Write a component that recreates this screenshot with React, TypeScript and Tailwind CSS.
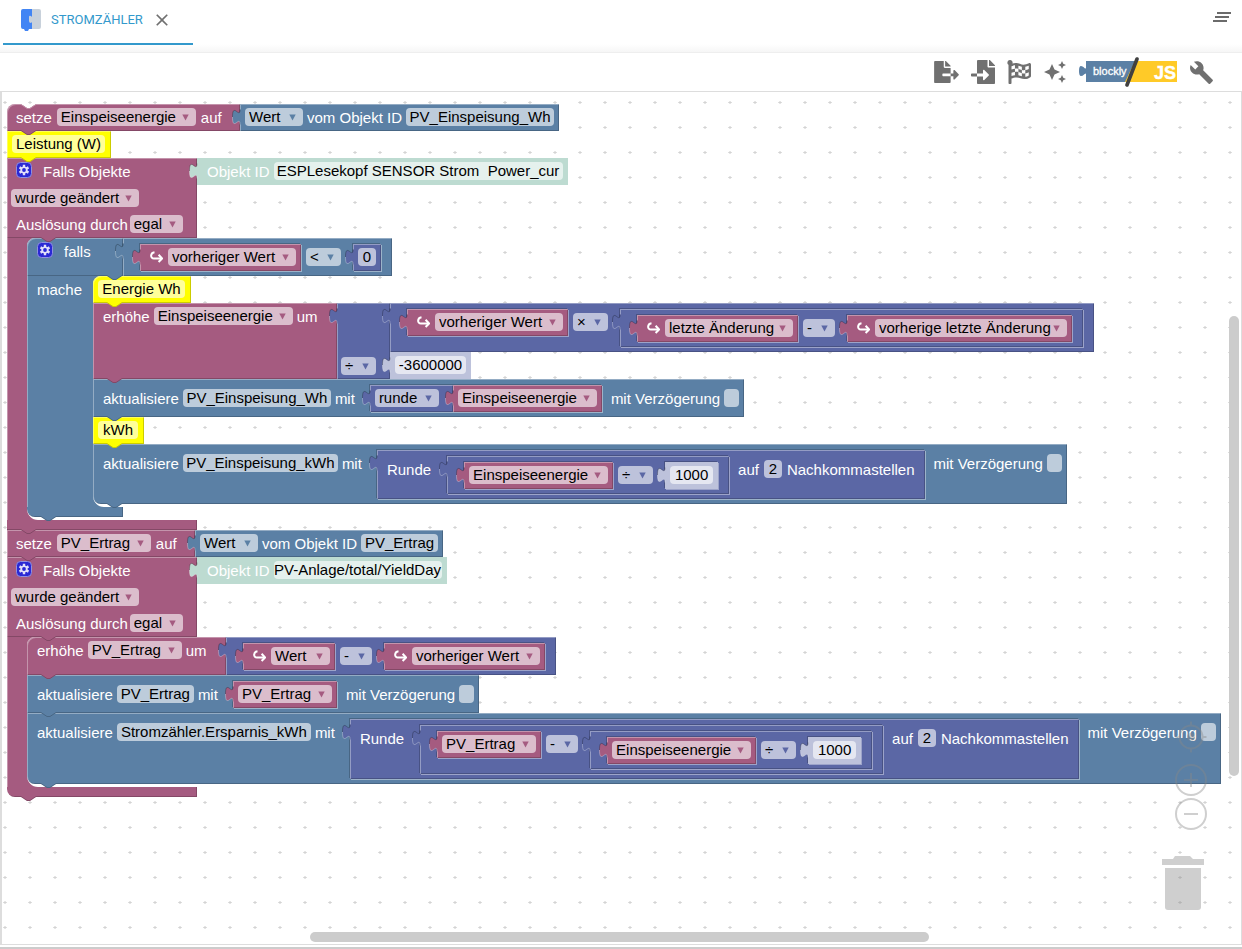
import React from 'react';
import clsx from 'clsx';
import { FaFileExport, FaFileImport, FaFlagCheckered } from 'react-icons/fa';
import { MdAutoAwesome, MdBuild, MdClearAll, MdClose } from 'react-icons/md';

type Tone = 'rose' | 'blue' | 'indigo' | 'yellow' | 'mint' | 'pale';

const BEVEL = 'shadow-[inset_1px_1px_0_rgba(255,255,255,0.35),inset_-1px_-1px_0_rgba(0,0,0,0.2)]';
const FLAT = 'shadow-none';

const TONES: Record<Tone, { body: string; field: string; ink: string; bevel: string }> = {
  rose: { body: 'bg-[#a55b80]', field: 'bg-[#dbbdcc]', ink: 'text-[#a55b80]', bevel: BEVEL },
  blue: { body: 'bg-[#5b80a5]', field: 'bg-[#bdccdb]', ink: 'text-[#5b80a5]', bevel: BEVEL },
  indigo: { body: 'bg-[#5b67a5]', field: 'bg-[#bdc2db]', ink: 'text-[#5b67a5]', bevel: BEVEL },
  yellow: { body: 'bg-[#ffff00]', field: 'bg-[#ffff99]', ink: 'text-[#ffff00]', bevel: BEVEL },
  mint: { body: 'bg-[#bddbd1]', field: 'bg-[#e5f1ed]', ink: 'text-[#bddbd1]', bevel: FLAT },
  pale: { body: 'bg-[#bdc2db]', field: 'bg-[#e5e7f1]', ink: 'text-[#bdc2db]', bevel: FLAT },
};

type Kids = { children?: React.ReactNode };

/* ---------- fields ---------- */

function Label({ className, children }: Kids & { className?: string }) {
  return <span className={clsx('shrink-0 whitespace-nowrap leading-[27px] text-white', className)}>{children}</span>;
}

function Pick({ tone, value, w, name }: { tone: Tone; value: string; w: string; name: string }) {
  return (
    <span className={clsx('my-1 grid h-[18px] shrink-0 items-center rounded', TONES[tone].field, w)}>
      <select
        aria-label={name}
        defaultValue={value}
        className="col-start-1 row-start-1 h-[18px] w-full appearance-none bg-transparent pl-1 leading-[18px] text-black outline-none"
      >
        <option>{value}</option>
      </select>
      <svg
        viewBox="0 0 7 7"
        className={clsx('pointer-events-none col-start-1 row-start-1 mr-[7px] h-[7px] w-[7px] justify-self-end', TONES[tone].ink)}
      >
        <path d="M0.3 0.5H6.7L3.5 6.5Z" fill="currentColor" />
      </svg>
    </span>
  );
}

function Entry({ tone, value, w, name }: { tone: Tone; value: string; w: string; name: string }) {
  return (
    <input
      type="text"
      aria-label={name}
      defaultValue={value}
      className={clsx('my-1 h-[18px] shrink-0 rounded text-center leading-[18px] text-black outline-none', TONES[tone].field, w)}
    />
  );
}

function Delay() {
  return (
    <label className="ml-[5px] flex shrink-0 items-start gap-1">
      <Label>mit Verzögerung</Label>
      <input type="checkbox" className="my-1 h-[18px] w-[15px] appearance-none rounded bg-[#bdccdb]" />
    </label>
  );
}

/* ---------- block pieces ---------- */

function Tab({ tone }: { tone: Tone }) {
  return (
    <svg viewBox="0 0 9 16" className={clsx('absolute -left-2 top-[5px] h-4 w-[9px]', TONES[tone].ink)}>
      <path d="M9 0.5H8C8 10.5 0.5 -7.5 0.5 8S8 5.5 8 15.5H9Z" fill="currentColor" />
      <path d="M8 0.5C8 10.5 0.5 -7.5 0.5 8" fill="none" stroke="#000" strokeOpacity="0.25" />
      <path d="M0.5 8C0.5 23.5 8 5.5 8 15.5" fill="none" stroke="#fff" strokeOpacity="0.3" />
    </svg>
  );
}

function Notch({ tone, className }: { tone: Tone; className: string }) {
  return (
    <svg viewBox="0 0 15 6" className={clsx('absolute z-10 h-[6px] w-[15px]', TONES[tone].ink, className)}>
      <path d="M0 0V1L6 5H9L15 1V0Z" fill="currentColor" />
      <path d="M0 0.5L6 4.5H9L15 0.5" fill="none" stroke="#000" strokeOpacity="0.2" />
    </svg>
  );
}

function Body({ tone, gap = 'gap-[5px]', className, children }: Kids & { tone: Tone; gap?: string; className?: string }) {
  return (
    <div className={clsx('relative flex min-h-[27px] shrink-0 items-start', gap, TONES[tone].body, TONES[tone].bevel, className)}>
      {children}
    </div>
  );
}

type BlockProps = Kids & { tone: Tone; gap?: string; className?: string; side?: React.ReactNode };

// a block that plugs into an input; "side" holds whatever is plugged into its own right edge
function Value({ tone, inset, gap, className, side, children }: BlockProps & { inset?: boolean }) {
  return (
    <div
      className={clsx(
        'relative flex shrink-0 self-start',
        inset && 'ml-[7px] shadow-[-1px_-1px_0_rgba(0,0,0,0.2),1px_1px_0_rgba(255,255,255,0.4)]',
      )}
    >
      <Body tone={tone} gap={gap} className={className}>{children}</Body>
      <Tab tone={tone} />
      {side}
    </div>
  );
}

function Statement({ tone, gap, className, side, children }: BlockProps) {
  return (
    <div className="relative flex w-max">
      <Body tone={tone} gap={gap} className={className}>{children}</Body>
      {side}
      <Notch tone={tone} className="left-[14px] top-full -mt-px" />
    </div>
  );
}

// the C-shaped mouth of a block: arm on the left, nested statements, foot below
function Mouth({ tone, arm, foot, label, children }: Kids & { tone: Tone; arm: string; foot: string; label?: string }) {
  return (
    <>
      <div className="flex">
        <div className={clsx('shrink-0 pl-[10px] shadow-[inset_1px_0_0_rgba(255,255,255,0.35)]', TONES[tone].body, arm)}>
          {label && <Label>{label}</Label>}
        </div>
        <div className="relative pb-[3px]">
          <svg viewBox="0 0 8 8" className={clsx('absolute left-0 top-0 h-2 w-2', TONES[tone].ink)}>
            <path d="M0 0H8A8 8 0 0 0 0 8Z" fill="currentColor" />
          </svg>
          <Notch tone={tone} className="left-[14px] top-0 -mt-px" />
          {children}
          <svg viewBox="0 0 11 11" className={clsx('absolute bottom-0 left-0 h-[11px] w-[11px]', TONES[tone].ink)}>
            <path d="M0 0V11H11A11 11 0 0 1 0 0Z" fill="currentColor" />
          </svg>
        </div>
      </div>
      <div className={clsx('relative h-[10px] shadow-[inset_-1px_-1px_0_rgba(0,0,0,0.2)]', TONES[tone].body, foot)}>
        <Notch tone={tone} className="left-[14px] top-full -mt-px" />
      </div>
    </>
  );
}

function Gear() {
  return (
    <button type="button" aria-label="Block anpassen" className="mt-1 shrink-0">
      <svg viewBox="0 0 16 16" className="h-4 w-4">
        <rect x="0.5" y="0.5" width="15" height="15" rx="4" fill="#2a28d4" stroke="#8f8fe0" />
        <g stroke="#e2e0fa" strokeWidth="2.4">
          <path d="M8 2.8V13.2M3.5 5.4L12.5 10.6M12.5 5.4L3.5 10.6" />
        </g>
        <circle cx="8" cy="8" r="3.6" fill="#e2e0fa" />
        <circle cx="8" cy="8" r="1.9" fill="#2a28d4" />
      </svg>
    </button>
  );
}

/* ---------- recurring blocks ---------- */

function Variable({ name, w, inset }: { name: string; w: string; inset?: boolean }) {
  return (
    <Value tone="rose" inset={inset} className="px-[5px]">
      <Pick tone="rose" value={name} w={w} name="Variable" />
    </Value>
  );
}

function Trigger({ name, w }: { name: string; w: string }) {
  return (
    <Value tone="rose" inset className="pl-[10px] pr-[5px]">
      <svg viewBox="0 0 13 12" className="mt-[7px] h-3 w-[13px] shrink-0" fill="none" stroke="#fff" strokeWidth="2">
        <path d="M4.5 1.2C0.2 1.8 0 7.5 4 7.5H11.5" />
        <path d="M8.6 3.8L12 7.5L8.6 11" />
      </svg>
      <Pick tone="rose" value={name} w={w} name="Eigenschaft" />
    </Value>
  );
}

function Num({ value, w, inset }: { value: string; w: string; inset?: boolean }) {
  return (
    <Value tone="pale" inset={inset} className="px-[5px]">
      <Entry tone="pale" value={value} w={w} name="Zahl" />
    </Value>
  );
}

function Op({ tone = 'indigo', value, w = 'w-[35px]' }: { tone?: Tone; value: string; w?: string }) {
  return <Pick tone={tone} value={value} w={w} name="Operator" />;
}

function ReadObject({ id, w }: { id: string; w: string }) {
  return (
    <Value tone="blue" gap="gap-1" className="px-[5px]">
      <Pick tone="blue" value="Wert" w="w-[58px]" name="Attribut" />
      <Label>vom Objekt ID</Label>
      <Entry tone="blue" value={id} w={w} name="Objekt ID" />
    </Value>
  );
}

function TriggerHead({ id, w }: { id: string; w: string }) {
  return (
    <div className="flex">
      <Body tone="rose" gap="gap-0" className="w-[190px] flex-col">
        <div className="flex items-start gap-[11px] pl-[9px]">
          <Gear />
          <Label>Falls Objekte</Label>
        </div>
        <div className="flex pl-1">
          <Pick tone="rose" value="wurde geändert" w="w-[128px]" name="Bedingung" />
        </div>
        <div className="flex gap-[2px] pl-[9px]">
          <Label>Auslösung durch</Label>
          <Pick tone="rose" value="egal" w="w-[53px]" name="Auslösung durch" />
        </div>
      </Body>
      <Value tone="mint" gap="gap-1" className="pl-[10px] pr-[5px]">
        <Label>Objekt ID</Label>
        <Entry tone="mint" value={id} w={w} name="Objekt ID" />
      </Value>
    </div>
  );
}

function Update({ id, w, last, children }: Kids & { id: string; w: string; last?: boolean }) {
  return (
    <Statement tone="blue" gap="gap-1" className={clsx('pb-[5px] pl-[10px] pr-[5px] pt-[6px]', last && 'rounded-bl-lg')}>
      <Label>aktualisiere</Label>
      <Entry tone="blue" value={id} w={w} name="Objekt ID" />
      <Label className="mr-1">mit</Label>
      {children}
      <Delay />
    </Statement>
  );
}

function Round({ children }: Kids) {
  return (
    <Value tone="indigo" inset className="px-[10px] pb-[5px] pt-[6px]">
      <Label className="mr-1">Runde</Label>
      {children}
      <Label className="ml-1">auf</Label>
      <Entry tone="indigo" value="2" w="w-[18px]" name="Nachkommastellen" />
      <Label>Nachkommastellen</Label>
    </Value>
  );
}

function Maths({ inset, tone = 'indigo', children }: Kids & { inset?: boolean; tone?: Tone }) {
  return <Value tone={tone} inset={inset} className="pb-[5px] pl-[10px] pr-[11px] pt-[6px]">{children}</Value>;
}

function Comment({ text, w, first }: { text: string; w: string; first?: boolean }) {
  return (
    <Statement tone="yellow" className={clsx('pl-[5px] pr-[6px]', first && 'rounded-tl-lg')}>
      <Entry tone="yellow" value={text} w={w} name="Kommentar" />
    </Statement>
  );
}

/* ---------- the program ---------- */

function Program() {
  return (
    <div className="w-max font-['Liberation_Sans',sans-serif] text-[15px]">
      <div className="relative">
        <svg viewBox="0 0 15 5" className="absolute left-[14px] top-0 z-10 h-[5px] w-[15px]">
          <path d="M0 0L6 4H9L15 0Z" fill="#fff" />
          <path d="M0 0.5L6 4.5H9L15 0.5" fill="none" stroke="#c08ca6" />
        </svg>
        <Statement tone="rose" className="w-[233px] rounded-tl-lg pl-[9px]" side={<ReadObject id="PV_Einspeisung_Wh" w="w-[148px]" />}>
          <Label>setze</Label>
          <Pick tone="rose" value="Einspeiseenergie" w="w-[139px]" name="Variable" />
          <Label>auf</Label>
        </Statement>
      </div>
      <Comment text="Leistung (W)" w="w-[93px]" />

      <TriggerHead id="ESPLesekopf SENSOR Strom  Power_cur" w="w-[289px]" />
      <Mouth tone="rose" arm="w-5" foot="w-[190px]">
        <div className="flex">
          <Body tone="blue" gap="gap-[11px]" className="w-[96px] rounded-tl-lg pl-[10px]">
            <Gear />
            <Label>falls</Label>
          </Body>
          <Maths tone="blue">
            <Trigger name="vorheriger Wert" w="w-[128px]" />
            <Op tone="blue" value="<" />
            <Value tone="indigo" inset className="px-[5px]">
              <Entry tone="indigo" value="0" w="w-[18px]" name="Zahl" />
            </Value>
          </Maths>
        </div>
        <Mouth tone="blue" arm="w-[66px]" foot="w-[96px] rounded-bl-lg" label="mache">
          <Comment text="Energie Wh" w="w-[87px]" first />
          <Statement
            tone="rose"
            gap="gap-1"
            className="w-[244px] pl-[10px]"
            side={
              <Value
                tone="indigo"
                className="w-[53px] items-end! pl-1"
                side={
                  <div className="flex flex-col">
                    <Maths>
                      <Trigger name="vorheriger Wert" w="w-[128px]" />
                      <Op value="×" />
                      <Maths inset>
                        <Trigger name="letzte Änderung" w="w-[128px]" />
                        <Op value="-" w="w-[32px]" />
                        <Trigger name="vorherige letzte Änderung" w="w-[192px]" />
                      </Maths>
                    </Maths>
                    <Num value="-3600000" w="w-[71px]" />
                  </div>
                }
              >
                <Op value="÷" />
              </Value>
            }
          >
            <Label>erhöhe</Label>
            <Pick tone="rose" value="Einspeiseenergie" w="w-[139px]" name="Variable" />
            <Label>um</Label>
          </Statement>
          <Update id="PV_Einspeisung_Wh" w="w-[148px]">
            <Value tone="indigo" inset className="w-[83px] pl-[5px]" side={<Variable name="Einspeiseenergie" w="w-[139px]" />}>
              <Pick tone="indigo" value="runde" w="w-[64px]" name="Rundung" />
            </Value>
          </Update>
          <Comment text="kWh" w="w-10" />
          <Update id="PV_Einspeisung_kWh" w="w-[155px]" last>
            <Round>
              <Maths inset>
                <Variable name="Einspeiseenergie" w="w-[139px]" inset />
                <Op value="÷" />
                <Num value="1000" w="w-[43px]" inset />
              </Maths>
            </Round>
          </Update>
        </Mouth>
      </Mouth>

      <Statement tone="rose" className="w-[188px] pl-[9px]" side={<ReadObject id="PV_Ertrag" w="w-[77px]" />}>
        <Label>setze</Label>
        <Pick tone="rose" value="PV_Ertrag" w="w-[94px]" name="Variable" />
        <Label>auf</Label>
      </Statement>

      <TriggerHead id="PV-Anlage/total/YieldDay" w="w-[168px]" />
      <Mouth tone="rose" arm="w-5" foot="w-[190px] rounded-bl-lg">
        <Statement
          tone="rose"
          gap="gap-1"
          className="w-[199px] rounded-tl-lg pl-[10px]"
          side={
            <Maths>
              <Trigger name="Wert" w="w-[59px]" />
              <Op value="-" w="w-[32px]" />
              <Trigger name="vorheriger Wert" w="w-[128px]" />
            </Maths>
          }
        >
          <Label>erhöhe</Label>
          <Pick tone="rose" value="PV_Ertrag" w="w-[94px]" name="Variable" />
          <Label>um</Label>
        </Statement>
        <Update id="PV_Ertrag" w="w-[77px]">
          <Variable name="PV_Ertrag" w="w-[94px]" inset />
        </Update>
        <Update id="Stromzähler.Ersparnis_kWh" w="w-[194px]" last>
          <Round>
            <Maths inset>
              <Variable name="PV_Ertrag" w="w-[94px]" inset />
              <Op value="-" w="w-[32px]" />
              <Maths inset>
                <Variable name="Einspeiseenergie" w="w-[139px]" inset />
                <Op value="÷" />
                <Num value="1000" w="w-[43px]" inset />
              </Maths>
            </Maths>
          </Round>
        </Update>
      </Mouth>
    </div>
  );
}

/* ---------- page chrome ---------- */

function Header() {
  return (
    <header className="flex h-[53px] items-start justify-between border-b border-[#eeeeee] bg-linear-to-b from-white from-85% to-[#f6f6f6] pl-[3px] pr-2">
      <div className="flex h-[45px] w-[190px] items-center border-b-2 border-[#3399cc] pb-[3px] pl-[18px] font-[Roboto,sans-serif]">
        <svg viewBox="0 0 20 22" className="h-[22px] w-5">
          <path d="M2 0H11V20H8L7 22H4L3 20H2Q0 20 0 18V2Q0 0 2 0Z" fill="#4285f4" />
          <path d="M11 0H18Q20 0 20 2V18Q20 20 18 20H11V13L10 14Q8 14 8 12V8Q8 6 10 7L11 8Z" fill="#c8d1db" />
        </svg>
        <a href="#stromzaehler" className="ml-[10px] text-[13px] leading-5 text-[#3399cc]">STROMZÄHLER</a>
        <button type="button" aria-label="Schließen" className="ml-[9px] text-[#707070]">
          <MdClose size={20} />
        </button>
      </div>
      <button type="button" aria-label="Alle schließen" className="mt-[5px] text-[#6b6b6b]">
        <MdClearAll size={24} />
      </button>
    </header>
  );
}

function ModeSwitch() {
  return (
    <button type="button" aria-label="Blockly / JS">
      <svg viewBox="0 0 98 30" className="h-[30px] w-[98px]">
        <path d="M7 4H56L48 25H7V17C6 15 5 19 2 19Q0 19 0 14T2 9C5 9 6 13 7 11Z" fill="#5b80a5" />
        <path d="M56 4H98V25H46Z" fill="#ffca28" />
        <path d="M58 2L48 28" stroke="#404040" strokeWidth="3.6" strokeLinecap="round" />
        <text x="14" y="18" fontSize="11" fill="#fff" stroke="#fff" strokeWidth="0.3" fontFamily="Liberation Sans, sans-serif">blockly</text>
        <text x="75" y="22" fontSize="18" fontWeight="bold" fill="#fff" stroke="#fff" strokeWidth="0.4" fontFamily="Liberation Sans, sans-serif">JS</text>
      </svg>
    </button>
  );
}

function Toolbar() {
  return (
    <div className="flex h-[38px] items-center justify-end gap-3 pr-7 text-[#707070]">
      <button type="button" aria-label="Exportieren"><FaFileExport className="h-[22px] w-[25px]" /></button>
      <button type="button" aria-label="Importieren"><FaFileImport size={24} /></button>
      <button type="button" aria-label="Prüfen"><FaFlagCheckered size={24} /></button>
      <button type="button" aria-label="Assistent"><MdAutoAwesome size={24} /></button>
      <ModeSwitch />
      <button type="button" aria-label="Einstellungen"><MdBuild size={25} /></button>
    </div>
  );
}

function Controls() {
  return (
    <div className="absolute bottom-[34px] right-[37px] z-20 flex flex-col items-end text-[#888888] opacity-40">
      <button type="button" aria-label="Zentrieren" className="mb-[9px] mr-[-4px]">
        <svg viewBox="0 0 34 34" className="h-[34px] w-[34px]" fill="none" stroke="currentColor" strokeWidth="2">
          <circle cx="17" cy="17" r="11.5" />
          <path d="M17 1.5V6M17 28V32.5M1.5 17H6M28 17H32.5" />
          <circle cx="17" cy="17" r="4" fill="currentColor" stroke="none" />
        </svg>
      </button>
      <button type="button" aria-label="Vergrößern" className="mr-[-4px]">
        <svg viewBox="0 0 34 34" className="h-[34px] w-[34px]" fill="none" stroke="currentColor" strokeWidth="2">
          <circle cx="17" cy="17" r="15" />
          <path d="M17 10V24M10 17H24" />
        </svg>
      </button>
      <button type="button" aria-label="Verkleinern" className="mb-[25px] mr-[-4px]">
        <svg viewBox="0 0 34 34" className="h-[34px] w-[34px]" fill="none" stroke="currentColor" strokeWidth="2">
          <circle cx="17" cy="17" r="15" />
          <path d="M10 17H24" />
        </svg>
      </button>
      <button type="button" aria-label="Papierkorb">
        <svg viewBox="0 0 42 54" className="h-[54px] w-[42px]" fill="currentColor">
          <path d="M0 3H11L13 0H28L31 3H42V9H0Z" />
          <path d="M3 12H39V51Q39 54 36 54H6Q3 54 3 51Z" />
        </svg>
      </button>
    </div>
  );
}

export default function App() {
  return (
    <div className="flex min-h-screen flex-col border-b-2 border-[#cccccc] bg-white">
      <Header />
      <Toolbar />
      <main className="relative mb-[2px] flex-1 overflow-hidden border border-l-2 border-[#dddddd] pb-[60px] pl-[5px] pt-3">
        <svg className="absolute inset-0 h-full w-full" aria-hidden="true">
          <defs>
            <pattern id="dots" width="25" height="25" x="1" y="8" patternUnits="userSpaceOnUse">
              <path d="M0 2.5H4" stroke="#dddddd" />
              <path d="M2 1V4" stroke="#cccccc" />
            </pattern>
          </defs>
          <rect width="100%" height="100%" fill="url(#dots)" />
        </svg>
        <div className="relative">
          <Program />
        </div>
        <Controls />
        <div className="absolute right-[2px] top-[224px] z-20 h-[460px] w-[10px] rounded-full bg-[#cccccc]" />
        <div className="absolute bottom-[2px] left-1/4 z-20 -ml-[2px] h-[10px] w-1/2 rounded-full bg-[#cccccc]" />
      </main>
    </div>
  );
}
